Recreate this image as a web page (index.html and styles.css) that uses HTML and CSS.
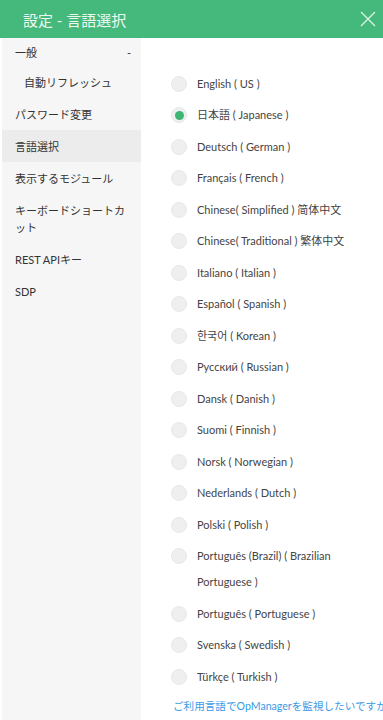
FILE: index.html
```html
<!DOCTYPE html>
<html lang="ja">
<head>
<meta charset="utf-8">
<title>設定 - 言語選択</title>
<link rel="stylesheet" href="styles.css">
</head>
<body>
<div class="panel">
  <header class="header">
    <h1 class="title">設定 - 言語選択</h1>
    <svg class="close" width="16" height="16" viewBox="0 0 16 16"><path d="M1 1 L15 15 M15 1 L1 15" stroke="#dff3e8" stroke-width="1.3" fill="none"/></svg>
  </header>
  <div class="body">
    <nav class="side">
      <div class="item first"><span>一般</span><span class="minus">-</span></div>
      <div class="item sub">自動リフレッシュ</div>
      <div class="item">パスワード変更</div>
      <div class="item active">言語選択</div>
      <div class="item">表示するモジュール</div>
      <div class="item">キーボードショートカット</div>
      <div class="item">REST APIキー</div>
      <div class="item">SDP</div>
    </nav>
    <main class="main">
      <ul class="langs">
        <li class="lang"><span class="radio"></span><span class="label">English ( US )</span></li>
        <li class="lang"><span class="radio checked"></span><span class="label">日本語 ( Japanese )</span></li>
        <li class="lang"><span class="radio"></span><span class="label">Deutsch ( German )</span></li>
        <li class="lang"><span class="radio"></span><span class="label">Français ( French )</span></li>
        <li class="lang"><span class="radio"></span><span class="label">Chinese( Simplified ) 简体中文</span></li>
        <li class="lang"><span class="radio"></span><span class="label">Chinese( Traditional ) 繁体中文</span></li>
        <li class="lang"><span class="radio"></span><span class="label">Italiano ( Italian )</span></li>
        <li class="lang"><span class="radio"></span><span class="label">Español ( Spanish )</span></li>
        <li class="lang"><span class="radio"></span><span class="label">한국어 ( Korean )</span></li>
        <li class="lang"><span class="radio"></span><span class="label">Русский ( Russian )</span></li>
        <li class="lang"><span class="radio"></span><span class="label">Dansk ( Danish )</span></li>
        <li class="lang"><span class="radio"></span><span class="label">Suomi ( Finnish )</span></li>
        <li class="lang"><span class="radio"></span><span class="label">Norsk ( Norwegian )</span></li>
        <li class="lang"><span class="radio"></span><span class="label">Nederlands ( Dutch )</span></li>
        <li class="lang"><span class="radio"></span><span class="label">Polski ( Polish )</span></li>
        <li class="lang"><span class="radio"></span><span class="label">Português (Brazil) ( Brazilian Portuguese )</span></li>
        <li class="lang"><span class="radio"></span><span class="label">Português ( Portuguese )</span></li>
        <li class="lang"><span class="radio"></span><span class="label">Svenska ( Swedish )</span></li>
        <li class="lang"><span class="radio"></span><span class="label">Türkçe ( Turkish )</span></li>
      </ul>
      <a class="link" href="#">ご利用言語でOpManagerを監視したいですか</a>
    </main>
  </div>
</div>
</body>
</html>
```

FILE: styles.css
```css
html, body {
  margin: 0;
  padding: 0;
  overflow: hidden;
  background: #fff;
}
body {
  font-family: Lato, "Noto Sans CJK JP", sans-serif;
  color: #333;
  width: 383px;
  height: 720px;
}
.panel {
  display: flex;
  flex-direction: column;
  height: 720px;
}
.header {
  height: 38px;
  background: #45b97c;
  display: flex;
  align-items: center;
  justify-content: space-between;
  padding: 0 7px 0 23px;
  flex: none;
}
.title {
  margin: 0;
  font-family: Lato, "Noto Sans CJK JP", sans-serif;
  font-weight: 400;
  font-size: 15px;
  color: #eef8f2;
}
.close {
  display: block;
}
.body {
  flex: 1;
  display: flex;
  min-height: 0;
}
.side {
  width: 139px;
  margin-left: 2px;
  background: #f6f6f6;
  flex: none;
  font-size: 11px;
}
.item {
  padding: 7.5px 10px 7.5px 13px;
  line-height: 17px;
  color: #333;
}
.item.first {
  display: flex;
  justify-content: space-between;
  padding-top: 6px;
  padding-bottom: 5px;
}
.item.sub {
  padding-left: 22px;
}
.item.active {
  background: #ececec;
}
.main {
  flex: 1;
  min-width: 0;
  padding: 30px 0 0 30px;
  font-size: 11px;
  white-space: nowrap;
}
.langs {
  list-style: none;
  margin: 0;
  padding: 0;
  width: 180px;
}
.lang {
  display: flex;
  align-items: flex-start;
  padding: 2.75px 0;
}
.radio {
  width: 16px;
  height: 16px;
  border-radius: 50%;
  background: #efefef;
  box-sizing: border-box;
  border: 1px solid #e8e8e8;
  flex: none;
  margin-top: 5px;
  margin-right: 10px;
  display: flex;
  align-items: center;
  justify-content: center;
}
.radio.checked::after {
  content: "";
  width: 9px;
  height: 9px;
  border-radius: 50%;
  background: #3bb673;
}
.label {
  line-height: 26px;
  white-space: normal;
  color: #444;
}
.link {
  display: block;
  margin: 0 0 0 2px;
  line-height: 26px;
  font-size: 10.6px;
  color: #3a9ae6;
  text-decoration: none;
}
```
